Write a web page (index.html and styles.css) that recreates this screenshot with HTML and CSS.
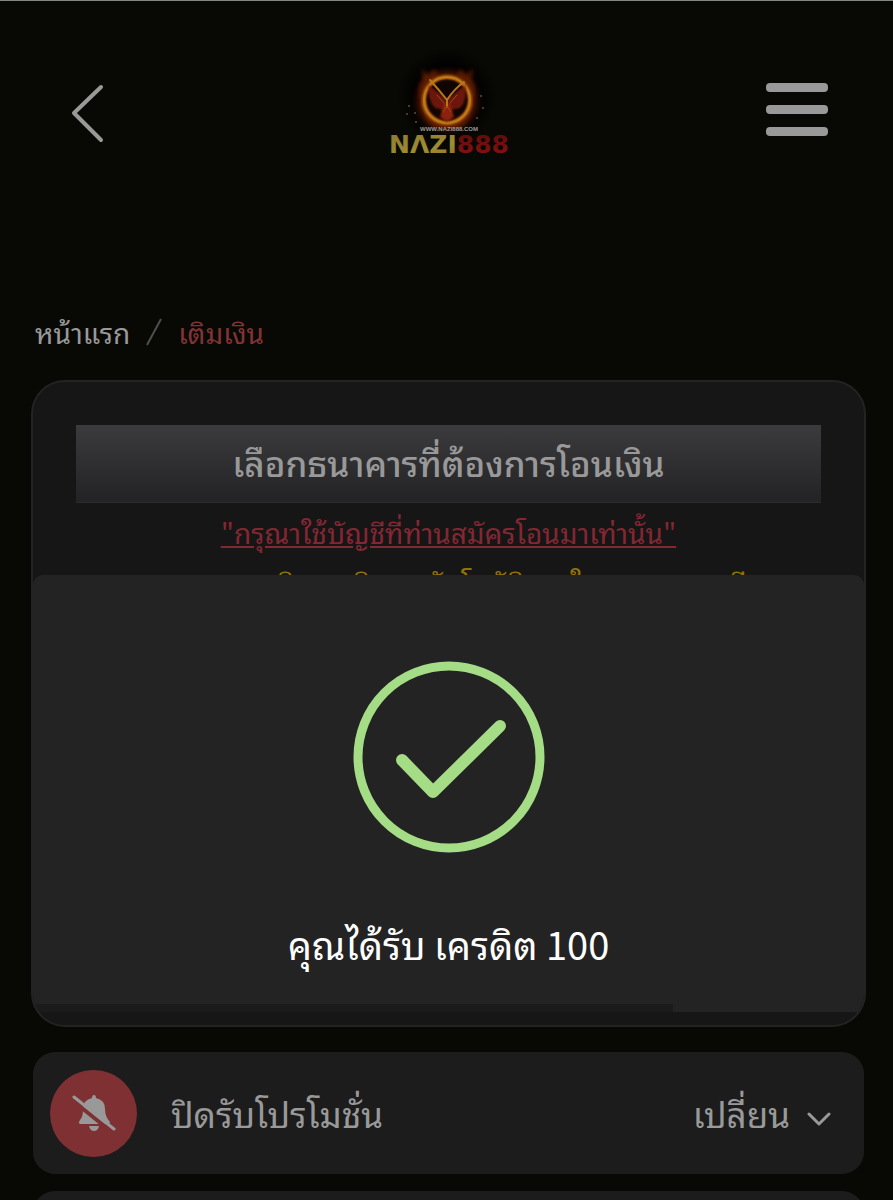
FILE: index.html
```html
<!DOCTYPE html>
<html lang="th">

<head>
  <meta charset="UTF-8">
  <meta name="viewport" content="width=device-width, initial-scale=1.0">
  <title>เติมเงิน</title>
  <link rel="stylesheet" href="styles.css">
</head>

<body>
  <header class="header">
    <button class="icon-btn back" aria-label="ย้อนกลับ">
      <svg width="36" height="110" viewBox="0 0 36 110">
        <path d="M31 38 L4 64 L31 91" fill="none" stroke="#999" stroke-width="4" stroke-linecap="round" stroke-linejoin="round"/>
      </svg>
    </button>

    <a href="#" class="logo" aria-label="NAZI888">
      <svg width="140" height="110" viewBox="0 0 140 110">
        <defs>
          <radialGradient id="halo">
            <stop offset="0.6" stop-color="#000"/>
            <stop offset="1" stop-color="#000" stop-opacity="0"/>
          </radialGradient>
          <radialGradient id="fire">
            <stop offset="0.4" stop-color="#3a0c02"/>
            <stop offset="0.62" stop-color="#a04806"/>
            <stop offset="0.76" stop-color="#5a1a03" stop-opacity="0.7"/>
            <stop offset="1" stop-color="#200500" stop-opacity="0"/>
          </radialGradient>
          <linearGradient id="gold" x1="0" y1="0" x2="1" y2="1">
            <stop offset="0" stop-color="#8c7a2a"/>
            <stop offset="0.5" stop-color="#a08c34"/>
            <stop offset="1" stop-color="#7d5c10"/>
          </linearGradient>
          <linearGradient id="red" x1="0" y1="0" x2="0" y2="1">
            <stop offset="0" stop-color="#5c0a0a"/>
            <stop offset="1" stop-color="#8c1212"/>
          </linearGradient>
          <filter id="soft" x="-30%" y="-30%" width="160%" height="160%">
            <feGaussianBlur stdDeviation="1"/>
          </filter>
          <filter id="flame" x="-30%" y="-30%" width="160%" height="160%">
            <feGaussianBlur stdDeviation="2"/>
          </filter>
        </defs>
        <circle cx="68" cy="48" r="50" fill="url(#halo)"/>
        <circle cx="68" cy="52" r="36" fill="url(#fire)"/>
        <g filter="url(#flame)" fill="#5c1a04">
          <path d="M43 52 Q37 40 44 30 L43 20 L50 27 L54 20 L60 27 Q50 36 43 52 Z"/>
          <path d="M93 52 Q99 40 92 30 L94 19 L87 27 L82 20 L77 27 Q87 36 93 52 Z"/>
          <path d="M46 62 Q46 72 56 78 L80 78 Q91 72 91 62 Q82 74 68 75 Q54 74 46 62 Z"/>
        </g>
        <circle cx="68" cy="51" r="21" fill="#100502"/>
        <circle cx="68" cy="51" r="23" fill="none" stroke="#b85c08" stroke-width="4" filter="url(#soft)"/>
        <circle cx="68" cy="51" r="23" fill="none" stroke="#b87c1c" stroke-width="2"/>
        <g filter="url(#soft)">
          <path d="M50 36 Q48 51 56 59 L65 61 L68 51 Z" fill="#6c1808"/>
          <path d="M86 36 Q89 51 81 59 L71 61 L68 51 Z" fill="#6c1808"/>
          <path d="M65 54 L71 54 L75 68 L68 73 L61 68 Z" fill="#8c2008"/>
        </g>
        <path d="M51 31 Q60 41 68 51 Q75 40 85 33 M68 50 L68 58" fill="none" stroke="#b87818" stroke-width="2" stroke-linecap="round"/>
        <path d="M58 46 L65 54 M78 46 L71 54 M64 63 L68 57 L72 63" fill="none" stroke="#9c4a10" stroke-width="1" stroke-linecap="round"/>
        <g fill="#6a4a30">
          <circle cx="30" cy="57" r="1"/><circle cx="36" cy="64" r="1"/><circle cx="28" cy="65" r="1"/>
          <circle cx="37" cy="73" r="1"/><circle cx="102" cy="47" r="1"/><circle cx="98" cy="69" r="1"/>
          <circle cx="104" cy="59" r="1"/>
        </g>
        <text x="70" y="82" class="logo-url" text-anchor="middle">WWW.NAZI888.COM</text>
        <text x="70" y="104" class="logo-name" text-anchor="middle"><tspan fill="url(#gold)">NΛZI</tspan><tspan fill="url(#red)">888</tspan></text>
      </svg>
    </a>

    <button class="icon-btn menu" aria-label="เมนู">
      <svg width="62" height="110" viewBox="0 0 62 110" fill="#999">
        <rect x="0" y="34" width="62" height="9" rx="4"/>
        <rect x="0" y="56" width="62" height="9" rx="4"/>
        <rect x="0" y="78" width="62" height="9" rx="4"/>
      </svg>
    </button>
  </header>

  <main class="content">
    <nav class="breadcrumb">
      <a href="#">หน้าแรก</a>
      <svg width="16" height="30" viewBox="0 0 16 30">
        <path d="M15 2 L1 28" stroke="#4c4e50" stroke-width="2"/>
      </svg>
      <a href="#" class="active">เติมเงิน</a>
    </nav>

    <section class="card">
      <h1 class="card-title">เลือกธนาคารที่ต้องการโอนเงิน</h1>
      <p class="warning">"กรุณาใช้บัญชีที่ท่านสมัครโอนมาเท่านั้น"</p>
      <p class="notice">รอระบบจะเติมเครดิต จะ อัตโนมัติภายในเวลา สามนาที</p>

      <div class="popup" role="alert">
        <svg class="popup-icon" width="192" height="192" viewBox="0 0 192 192" fill="none" stroke="#a5dc86">
          <circle cx="96" cy="96" r="91" stroke-width="9"/>
          <path d="M49 99 L80 131 L147 65" stroke-width="12" stroke-linecap="round" stroke-linejoin="round"/>
        </svg>
        <h2 class="popup-title">คุณได้รับ เครดิต 100</h2>
        <div class="popup-timer"></div>
      </div>
    </section>

    <section class="promo">
      <span class="promo-icon">
        <svg width="44" height="36" viewBox="0 0 44 36">
          <path d="M22 0 Q24 0 24 3 Q33 5 33 14 Q33 22 38 27 Q38 29 36 29 L8 29 Q6 28 8 25 Q11 22 11 14 Q11 5 20 3 Q20 0 22 0 Z M17 31 L27 31 Q26 36 22 36 Q18 36 17 31 Z" fill="#999"/>
          <path d="M0 5 L41 38" stroke="#7f3033" stroke-width="4"/>
          <path d="M2 2 L42 34" stroke="#999" stroke-width="3" stroke-linecap="round"/>
        </svg>
      </span>
      <span class="promo-name">ปิดรับโปรโมชั่น</span>
      <button class="promo-change">
        เปลี่ยน
        <svg width="24" height="16" viewBox="0 0 24 16">
          <path d="M2 3 L12 13 L22 3" fill="none" stroke="#999" stroke-width="3" stroke-linecap="round" stroke-linejoin="round"/>
        </svg>
      </button>
    </section>

    <section class="promo"></section>
  </main>
</body>

</html>
```
FILE: styles.css
```css
* {
  margin: 0;
  padding: 0;
  box-sizing: border-box;
}

body {
  height: 100vh;
  overflow: hidden;
  border-top: 1px solid #7f8683;
  background: #080904;
  color: #999;
  font-family: "Noto Sans CJK SC", "Noto Sans Thai Looped", "Noto Sans Thai", sans-serif;
}

svg {
  display: block;
}

a {
  color: inherit;
  text-decoration: none;
}

button {
  border: none;
  background: none;
  color: inherit;
  font: inherit;
  cursor: pointer;
}

.header {
  display: grid;
  grid-template-columns: 1fr auto 1fr;
  padding: 48px 65px 0 70px;
}

.back {
  justify-self: start;
}

.menu {
  justify-self: end;
}

.logo-name {
  font: bold 25px "DejaVu Sans", sans-serif;
}

.logo-url {
  font: bold 6px "Liberation Sans", sans-serif;
  fill: #999;
}

.content {
  padding: 151px 27px 0 31px;
}

.breadcrumb {
  display: flex;
  align-items: center;
  gap: 16px;
  padding: 0 4px;
  margin-bottom: 26px;
  font-size: 28px;
  line-height: 44px;
}

.breadcrumb .active {
  color: #823335;
}

/* deposit card */
.card {
  position: relative;
  height: 647px;
  padding: 43px;
  overflow: hidden;
  border: 2px solid #232323;
  border-radius: 34px;
  background: #161616;
  text-align: center;
}

.card-title {
  padding: 4px 0 8px;
  border-bottom: 1px solid #2c2c2e;
  background: linear-gradient(#3b3b3d, #232325);
  font-size: 35px;
  font-weight: 500;
  line-height: 65px;
}

.warning {
  color: #832733;
  font-size: 28px;
  line-height: 58px;
  text-decoration: underline;
}

.notice {
  color: #927208;
  font-size: 28px;
  line-height: 42px;
}

/* success popup */
.popup {
  position: absolute;
  right: 0;
  bottom: 13px;
  left: 0;
  padding-top: 86px;
  border-radius: 10px 10px 0 0;
  background: #232323;
}

.popup-icon {
  margin: 0 auto;
}

.popup-title {
  padding: 72px 0 41px;
  color: #fff;
  font-size: 38px;
  font-weight: 400;
  line-height: 38px;
}

.popup-timer {
  width: 77%;
  height: 8px;
  background: #1b1b1b;
}

/* promotion rows */
.promo {
  display: flex;
  align-items: center;
  height: 122px;
  margin: 25px 2px 17px;
  padding: 0 33px 0 17px;
  border-radius: 22px;
  background: #1c1c1c;
  font-size: 35px;
  line-height: 52px;
}

.promo + .promo {
  margin-top: 0;
}

.promo-icon {
  display: flex;
  align-items: center;
  justify-content: center;
  width: 87px;
  height: 87px;
  margin-right: 34px;
  border-radius: 50%;
  background: #7f3033;
}

.promo-change {
  display: flex;
  align-items: center;
  gap: 17px;
  margin-left: auto;
}

.promo-change svg {
  margin-top: 12px;
}
```
